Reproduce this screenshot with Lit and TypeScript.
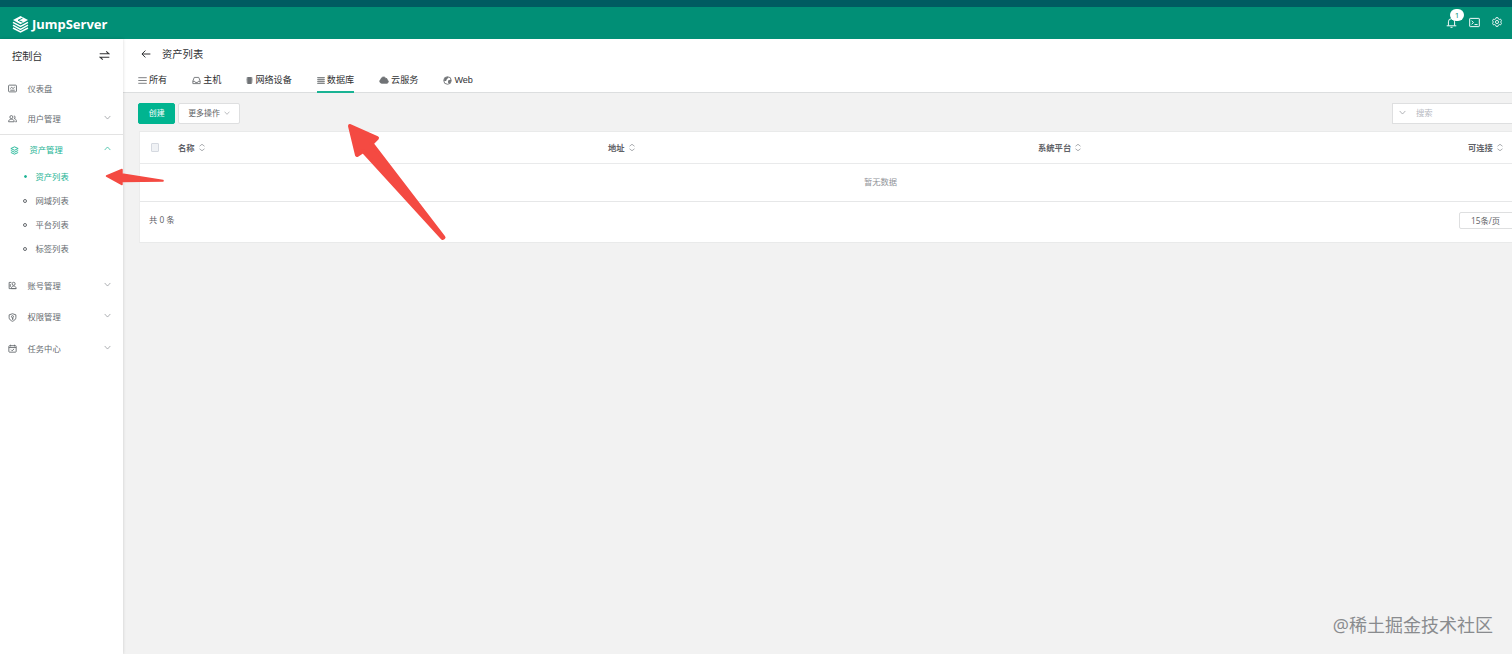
import { LitElement, html, svg, css, nothing } from "lit";
import { customElement } from "lit/decorators.js";
import { classMap } from "lit/directives/class-map.js";

const icons: Record<string, unknown> = {
  board: svg`<rect x="1" y="2" width="14" height="12" rx="1.5"/><path d="M4 8l2.5-2 2.5 2 3-2.5M4 11h8"/>`,
  users: svg`<circle cx="6" cy="5.500" r="2.700"/><path d="M1 13.800c0-3 2-4.500 5-4.500s5 1.500 5 4.500z"/><path d="M10.500 3.300c2.500 0 3 4 .5 4.800 2.500.3 4 2.200 4 5.700h-2"/>`,
  assets: svg`<path d="M8 1.500l6.500 3L8 7.500l-6.500-3zM1.500 8L8 11l6.500-3M1.500 11.500L8 14.500l6.500-3"/>`,
  account: svg`<path d="M6 2.500H2v11h12.500"/><path d="M4 5.500v5"/><circle cx="10" cy="5" r="2.700"/><path d="M6 13.500c0-3 1.500-4.500 4-4.500s4.500 1.500 4.500 4.500z"/>`,
  shield: svg`<path d="M8 1.300l6 2v5c0 3-3 5.300-6 6.400-3-1.100-6-3.400-6-6.400v-5z"/><circle cx="8" cy="6.500" r="1.800"/><path d="M8 8.500v3.500M8 10.500h2"/>`,
  task: svg`<rect x="1.500" y="3" width="13" height="11.500" rx="1.200"/><path d="M1.500 6.300h13M4.500 1.300v3M11.500 1.300v3M5.300 10l2 2 3.500-3.300"/>`,
  swap: svg`<path d="M1 5.500h13.500L10.500 2M15 10.500H1.500L5.500 14"/>`,
  back: svg`<path d="M15 8H1.500M7 2.500L1.500 8 7 13.500"/>`,
  down: svg`<path d="M1.500 4.500L8 11.500l6.500-7"/>`,
  up: svg`<path d="M1.500 11.500L8 4.500l6.500 7"/>`,
  bars: svg`<path d="M.5 3h15M.5 8h15M.5 13h15"/>`,
  inbox: svg`<path d="M1.500 9L4 2.500h8L14.500 9v4.500h-13zM1.500 9.500H5l1 2h4l1-2h3.500"/>`,
  chip: svg`<path fill="currentColor" stroke="none" d="M3 0h10v16H3z"/><path d="M.5 2.500h15M.5 5.500h15M.5 8.500h15M.5 11.500h15" stroke-width="1.300"/>`,
  db: svg`<path fill="currentColor" stroke="none" opacity=".35" d="M1 1h14v14H1z"/><path d="M.5 2h15M.5 6h15M.5 10h15M.5 14h15"/>`,
  cloud: svg`<path fill="currentColor" d="M4 13a3 3 0 0 1-.8-5.800A4 4 0 0 1 10.500 5a2.700 2.700 0 0 1 2.500 3A2.600 2.600 0 0 1 13 13z"/>`,
  globe: svg`<circle cx="8" cy="8" r="6.700"/><path fill="currentColor" stroke="none" d="M2 6l2-3 4-1.500 2 1.500-3 2.500L5.500 9 2 9zM9 8l5-2 .5 3-3 4.500L9 12z"/>`,
  bell: svg`<path d="M3.500 12.500V7a4.500 4.500 0 0 1 9 0v5.500M1 12.800h14M6.500 15h3M8 2.500V1"/>`,
  term: svg`<rect x="1" y="2" width="14" height="12" rx=".8"/><path d="M3.800 5.500L6.500 8l-2.700 2.500M8 11h4.500"/>`,
  gear: svg`<path d="M6.500 1h3l.6 2 1.600.9 2-.5 1.500 2.600L13.800 8l1.400 2-1.500 2.600-2-.5-1.600.9-.6 2h-3l-.6-2-1.600-.9-2 .5L.8 10l1.400-2L.8 6l1.500-2.600 2 .5 1.600-.9z"/><circle cx="8" cy="8" r="2.500"/>`,
  sort: svg`<path d="M3 5.500L8 1.500l5 4M3 10.500l5 4 5-4"/>`,
};

const icon = (name: string, cls = "") =>
  html`<svg class="icon ${cls}" viewBox="0 0 16 16">${icons[name]}</svg>`;

@customElement("app-header")
class AppHeader extends LitElement {
  static styles = css`
    :host { display: flex; box-sizing: border-box; height: 39px; border-top: 7px solid #005b61; background: #018f76; color: #fff; align-items: center; justify-content: space-between; padding: 0 10px 0 12px; }
    .brand { display: flex; align-items: center; gap: 3px; padding-top: 2px; }
    .logo { width: 17px; height: 18px; }
    .name { font: 700 13px/18px "Noto Sans", sans-serif; letter-spacing: 0; }
    .tools { display: flex; align-items: center; gap: 12px; padding-bottom: 2px; }
    .icon { display: block; width: 11px; height: 11px; fill: none; stroke: currentColor; stroke-width: 1.4; }
    .gear { width: 10px; height: 10px; }
    .bell { position: relative; }
    .badge { position: absolute; left: 4px; top: -8px; width: 14px; height: 12px; border-radius: 6px; background: #fff; color: #018f76; font: 8px/12px "Open Sans", sans-serif; text-align: center; }
  `;
  render() {
    return html`
      <div class="brand">
        <svg class="logo" viewBox="0 0 17 18" fill="none" stroke="#fff" stroke-width="1.500">
          <path d="M8.500 1L16 5 8.500 9.200 1 5z" fill="#fff" stroke="none"/>
          <path d="M10.500 3.200L6 5.300l4.500 1.900" stroke="#018f76" stroke-width="1"/>
          <path d="M1 7.300l7.500 4.100L16 7.300M1 10.200l7.500 4.100 7.500-4.100M1 13l7.500 4 7.500-4"/>
        </svg>
        <span class="name">JumpServer</span>
      </div>
      <div class="tools">
        <div class="bell">${icon("bell")}<span class="badge">1</span></div>
        ${icon("term")}${icon("gear", "gear")}
      </div>`;
  }
}

@customElement("side-nav")
class SideNav extends LitElement {
  static styles = css`
    :host { display: flex; flex-direction: column; width: 123px; flex: none; background: #fff; color: #666b6f; font-size: 8.300px; box-shadow: 0 0 3px rgba(0,0,0,.16); z-index: 1; }
    .icon { display: block; width: 9px; height: 9px; fill: none; stroke: currentColor; stroke-width: 1.600; flex: none; }
    .head { display: flex; align-items: center; justify-content: space-between; height: 32px; padding: 0 13px 2px 12px; font-size: 10.200px; color: #303133; }
    .swap { width: 11px; height: 11px; }
    .row { display: flex; align-items: center; height: 31.500px; padding: 0 12px 0 8px; box-sizing: border-box; }
    .row.short { height: 30.500px; }
    .label { flex: 1; padding: 0 0 2px 10.500px; }
    .short .label { padding-bottom: 1px; }
    .arrow { width: 7px; height: 7px; stroke: #8b8f94; margin-top: -3px; }
    .open { color: #1ab394; border-top: 1px solid #e3e3e3; padding-left: 10px; }
    .open .arrow { stroke: #1ab394; }
    .subs { padding: 0 0 8.500px 23px; margin-top: -1px; }
    .sub { display: flex; align-items: center; height: 24.200px; gap: 8.500px; }
    .text { padding-bottom: 2px; }
    .dot { width: 4px; height: 4px; box-sizing: border-box; border: 1px solid currentColor; border-radius: 50%; }
    .active { color: #1ab394; }
    .active .dot { background: currentColor; width: 3px; height: 3px; margin: 0 0 0 1px; }
  `;
  row(name: string, label: string, cls = "", arrow = "down") {
    return html`<div class="row ${cls}">${icon(name)}<span class="label">${label}</span>${arrow ? icon(arrow, "arrow") : nothing}</div>`;
  }
  render() {
    return html`
      <div class="head"><span>控制台</span>${icon("swap", "swap")}</div>
      ${this.row("board", "仪表盘", "short", "")}
      ${this.row("users", "用户管理", "short")}
      ${this.row("assets", "资产管理", "open", "up")}
      <div class="subs">
        ${["资产列表", "网域列表", "平台列表", "标签列表"].map((t, i) =>
          html`<div class=${classMap({ sub: true, active: i === 0 })}><span class="dot"></span><span class="text">${t}</span></div>`)}
      </div>
      ${this.row("account", "账号管理")}
      ${this.row("shield", "权限管理")}
      ${this.row("task", "任务中心")}`;
  }
}

@customElement("asset-page")
class AssetPage extends LitElement {
  static styles = css`
    :host { display: block; flex: 1; min-width: 0; overflow: hidden; font-size: 8.300px; color: #606266; }
    .icon { display: block; width: 9px; height: 9px; fill: none; stroke: currentColor; stroke-width: 1.600; flex: none; }
    .top { background: #fff; height: 53px; border-bottom: 1px solid #dcdedf; padding-left: 15px; color: #303133; }
    .title { display: flex; align-items: center; height: 30px; gap: 11px; font-size: 10.300px; padding-left: 3px; }
    .title span { padding-bottom: 1px; }
    .back { width: 10px; height: 10px; }
    .tabs { display: flex; gap: 25px; font-size: 9.100px; height: 24px; }
    .tab { display: flex; align-items: center; gap: 2px; height: 22px; border-bottom: 2px solid transparent; white-space: nowrap; flex: none; }
    .tab .icon { color: #707376; }
    .tab .chip { width: 7px; }
    .tab .db { width: 8px; }
    .tab .cloud { width: 10px; height: 10px; }
    .tab span { padding-bottom: 1.500px; font-family: "Liberation Sans", "Noto Sans CJK SC", sans-serif; }
    .tab .globe + span { padding-bottom: 0; }
    .on { border-color: #1ab394; }
    .body { width: 1481px; padding: 10px 0 0 17px; }
    .tools { display: flex; height: 21px; margin-left: -1.600px; }
    .btn { display: flex; align-items: center; justify-content: center; box-sizing: border-box; border: 1px solid #dedfe0; background: #fff; border-radius: 2px; font-size: 7.900px; gap: 4px; padding-bottom: 2px; flex: none; }
    .create { width: 36.600px; background: #00b490; border-color: #00b490; color: #fff; margin-right: 3px; }
    .more { width: 62px; }
    .chev { width: 6px; height: 6px; stroke: #909399; margin-top: 1px; }
    .search { display: flex; align-items: center; box-sizing: border-box; width: 220px; height: 21px; margin-left: 1151.500px; border: 1px solid #dedfe0; background: #fff; color: #b6b9bf; gap: 10.500px; padding: 0 0 3px 6px; flex: none; }
    .search .chev { width: 7px; height: 7px; }
    .card { background: #fff; margin-top: 7px; border-top: 1px solid #e9eaea; border-left: 1px solid #ececec; margin-left: -1px; border-bottom: 1px solid #e9eaea; height: 110px; overflow: hidden; }
    .head { display: flex; align-items: center; height: 30px; padding-bottom: 1px; border-bottom: 1px solid #e9eaeb; color: #5f6267; }
    .check { width: 30px; display: flex; justify-content: center; flex: none; }
    .box { width: 6px; height: 7px; border: 1px solid #d5d9e0; background: #f0f2f5; border-radius: 1px; }
    .col { width: 422px; flex: none; display: flex; align-items: center; gap: 3px; padding-left: 8px; }
    .col span { padding-bottom: 1px; font-weight: 600; }
    .sort { width: 8px; height: 9px; stroke: #96999e; margin-top: 1px; }
    .empty { height: 36px; line-height: 36px; padding-bottom: 1px; border-bottom: 1px solid #e6e7e8; text-align: center; color: #909399; }
    .foot { display: flex; align-items: center; justify-content: space-between; height: 36px; padding-left: 9px; }
    .foot span { padding-bottom: 3px; }
    .size { width: 149px; height: 17px; box-sizing: border-box; border: 1px solid #dedfe0; border-radius: 2px; padding-left: 11px; line-height: 16px; margin-right: 13px; }
  `;
  render() {
    const tabs = [["bars", "所有"], ["inbox", "主机"], ["chip", "网络设备"], ["db", "数据库"], ["cloud", "云服务"], ["globe", "Web"]];
    return html`
      <div class="top">
        <div class="title">${icon("back", "back")}<span>资产列表</span></div>
        <div class="tabs">${tabs.map(([i, t]) => html`<div class=${classMap({ tab: true, on: i === "db" })}>${icon(i, i)}<span>${t}</span></div>`)}</div>
      </div>
      <div class="body">
        <div class="tools">
          <div class="btn create">创建</div>
          <div class="btn more">更多操作${icon("down", "chev")}</div>
          <div class="search">${icon("down", "chev")}<span>搜索</span></div>
        </div>
        <div class="card">
          <div class="head">
            <div class="check"><span class="box"></span></div>
            ${["名称", "地址", "系统平台", "可连接"].map((t) => html`<div class="col"><span>${t}</span>${icon("sort", "sort")}</div>`)}
          </div>
          <div class="empty">暂无数据</div>
          <div class="foot"><span>共 0 条</span><div class="size">15条/页</div></div>
        </div>
      </div>`;
  }
}

@customElement("app-root")
class AppRoot extends LitElement {
  static styles = css`
    :host { display: flex; flex-direction: column; position: relative; height: 654px; overflow: hidden; background: #f2f2f2; font-family: "Open Sans", "Noto Sans CJK SC", sans-serif; }
    .main { display: flex; flex: 1; min-height: 0; }
    .marks { position: absolute; left: 0; top: 0; width: 1512px; height: 654px; z-index: 2; pointer-events: none; fill: #f44a42; stroke: #f44a42; stroke-linejoin: round; }
    .mark { position: absolute; right: 19px; bottom: 16px; font-size: 18px; line-height: 26px; font-weight: 400; color: #898b8e; white-space: nowrap; }
  `;
  render() {
    return html`
      <app-header></app-header>
      <div class="main"><side-nav></side-nav><asset-page></asset-page></div>
      <svg class="marks" viewBox="0 0 1512 654">
        <path stroke-width="4" d="M350 126L377 138 371.500 143.500 443.500 237.500 442.500 238 363 151 357 155z"/>
        <path stroke-width="1.500" d="M106.500 176L122 169.500V174L163 180.500V181L122 181.500V184.500z"/>
      </svg>
      <div class="mark">@稀土掘金技术社区</div>`;
  }
}
